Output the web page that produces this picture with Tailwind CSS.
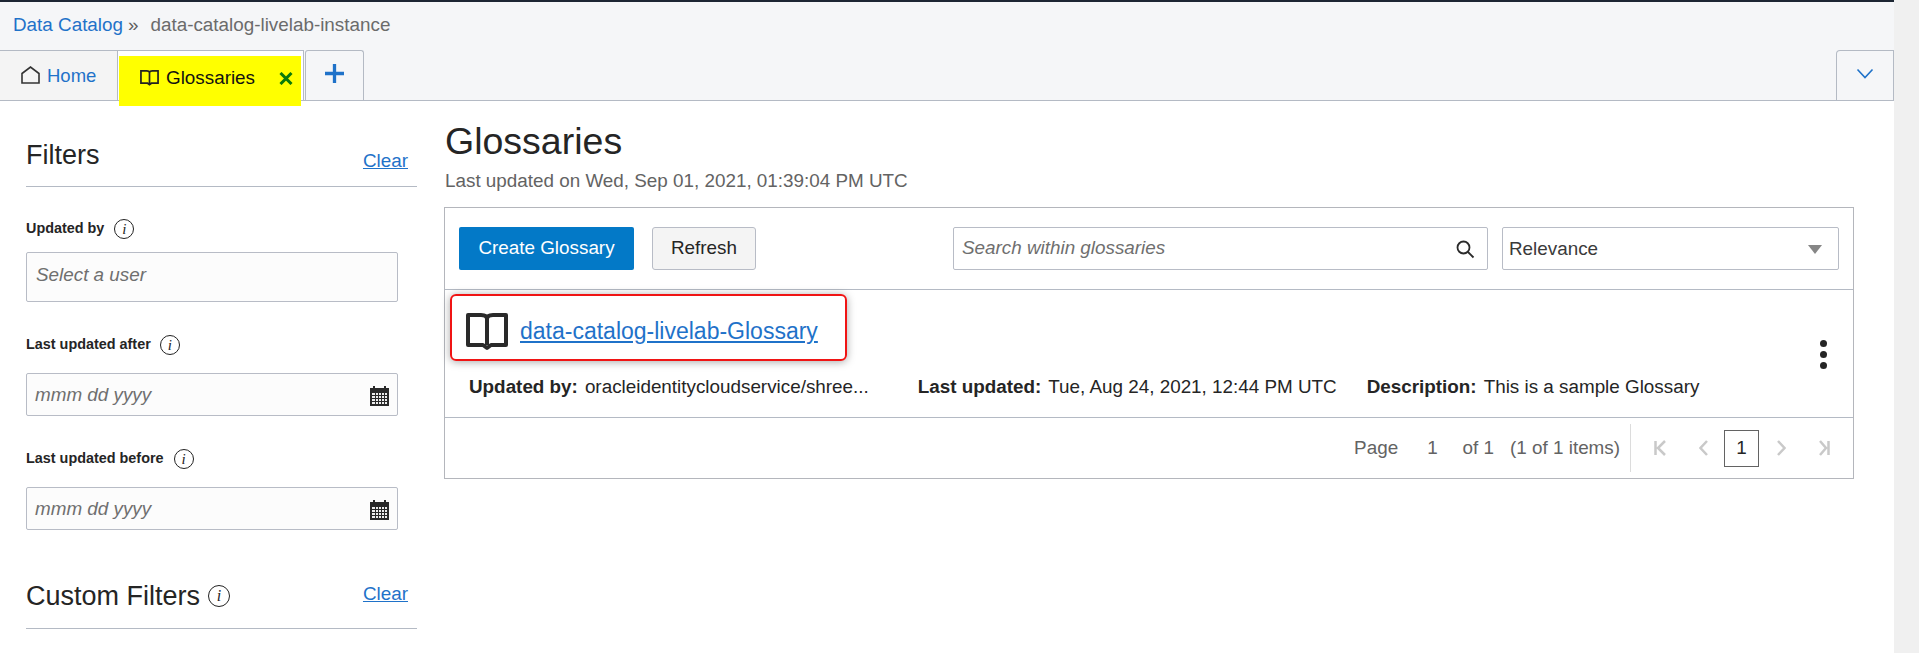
<!DOCTYPE html>
<html lang="en">

<head>
  <meta charset="UTF-8" />
  <title>Glossaries - Data Catalog</title>
  <script src="https://cdn.jsdelivr.net/npm/@tailwindcss/browser@4"></script>
</head>

<body class="h-[653px] overflow-hidden bg-[#f0f0f0] font-['Liberation_Sans',Arial,sans-serif] text-[#252525]">
  <div class="w-[1894px] h-[653px] bg-white overflow-hidden">

    <!-- Breadcrumb and tabs -->
    <header class="h-[101px] bg-[#f5f6f8] border-t-[2px] border-t-[#1d2633] border-b border-b-[#b4bac4]">
      <div class="h-[48px] pl-[13px] pb-[2px] flex items-center text-[18.85px] leading-none">
        <a class="text-[#1f72c9]">Data Catalog</a>
        <span class="ml-[5px] text-[#5f5f5f]">»</span>
        <span class="ml-[12px] text-[#6b6b6b]">data-catalog-livelab-instance</span>
      </div>
      <div class="h-[50px] flex">
        <div class="w-[118px] h-[50px] bg-[#f4f4f4] border-r border-t border-[#b4bac4] flex items-center pl-[21px] gap-[7px] text-[18.5px] text-[#1f72c9]">
          <svg class="w-[19px] h-[18px] mb-[1px]" viewBox="0 0 19 18" fill="none" stroke="#333" stroke-width="1.6"><path d="M1 17V7.500L9.500 1 18 7.500V17z" /></svg>
          <span>Home</span>
        </div>
        <div class="relative w-[186px] h-[50px] bg-white border-r border-t border-[#b4bac4]">
          <!-- yellow annotation over the active tab -->
          <div class="absolute left-[1px] top-[5px] w-[182px] h-[50px] bg-[#ffff00] flex items-center pl-[21px] text-[18.85px] text-[#111] pb-[6px]">
            <svg class="w-[19px] h-[18px] mr-[7px]" viewBox="0 0 20 18" fill="none" stroke="#222" stroke-width="1.8"><path d="M1 1.500h6c1.500 0 3 .5 3 2 0-1.500 1.500-2 3-2h6v13h-7l-2 1.500-2-1.500H1zM10 3.500v11" /></svg>
            <span>Glossaries</span>
            <svg class="w-[14px] h-[13px] ml-[24px]" viewBox="0 0 14 13" stroke="#0a7a0a" stroke-width="3"><path d="M1.500 1l11 11M12.500 1l-11 11" /></svg>
          </div>
        </div>
        <div class="ml-px w-[59px] h-[50px] bg-[#f5f6f8] border border-b-0 border-[#b4bac4] rounded-t-[3px] flex items-center justify-center">
          <svg class="w-[19px] h-[19px] mb-[4px]" viewBox="0 0 19 19" stroke="#1f72c9" stroke-width="3.300"><path d="M9.500 0v19M0 9.500h19" /></svg>
        </div>
        <div class="ml-auto w-[58px] h-[50px] border border-b-0 border-[#b4bac4] rounded-tl-[4px] flex items-center justify-center">
          <svg class="w-[18px] h-[12px] mb-[4px]" viewBox="0 0 18 12" fill="none" stroke="#1f72c9" stroke-width="1.600"><path d="M1.500 1.500L9 9.500l7.500-8" /></svg>
        </div>
      </div>
    </header>

    <div class="flex">
      <!-- Filters -->
      <aside class="w-[444px] shrink-0 pl-[26px] pr-[27px]">
        <div class="h-[86px] flex items-end justify-between border-b border-[#b4bac4] pb-[14px]">
          <h2 class="text-[27px] leading-[34px]">Filters</h2>
          <a class="mr-[9px] text-[18.85px] leading-[22px] text-[#1f72c9] underline">Clear</a>
        </div>

        <div class="mt-[32px] flex items-center gap-[10px] h-[20px] text-[14.4px] font-bold">
          Updated by
          <span class="w-[20px] h-[20px] rounded-full border border-[#222] flex items-center justify-center font-['Liberation_Serif',serif] italic font-normal text-[15px]">i</span>
        </div>
        <div class="mt-[13px] w-[372px] h-[50px] bg-[#fcfcfc] border border-[#b8bcc6] rounded-[2px] pl-[9px] pt-[11px] text-[18.85px] leading-[22px] italic text-[#6f6f6f]">Select a user</div>

        <div class="mt-[33px] flex items-center gap-[9px] h-[20px] text-[14.4px] font-bold">
          Last updated after
          <span class="w-[20px] h-[20px] rounded-full border border-[#222] flex items-center justify-center font-['Liberation_Serif',serif] italic font-normal text-[15px]">i</span>
        </div>
        <div class="mt-[18px] w-[372px] h-[43px] bg-[#fcfcfc] border border-[#b8bcc6] rounded-[2px] pl-[8px] pr-[8px] flex items-center justify-between text-[18.85px] italic text-[#6f6f6f]">
          <span class="pt-[2px]">mmm dd yyyy</span>
          <svg class="w-[19px] h-[20px] mt-[2px]" viewBox="0 0 19 20"><path fill="#2a2a2a" d="M0 2h3V0h2v2h9V0h2v2h3v18H0z" /><path fill="#eee" d="M2 7h15v11H2z" /><path stroke="#2a2a2a" stroke-width="1" d="M2 9.500h15M2 12.500h15M2 15.500h15M5.500 7v11M8.500 7v11M11.500 7v11M14.500 7v11" /></svg>
        </div>

        <div class="mt-[33px] flex items-center gap-[10px] h-[20px] text-[14.4px] font-bold">
          Last updated before
          <span class="w-[20px] h-[20px] rounded-full border border-[#222] flex items-center justify-center font-['Liberation_Serif',serif] italic font-normal text-[15px]">i</span>
        </div>
        <div class="mt-[18px] w-[372px] h-[43px] bg-[#fcfcfc] border border-[#b8bcc6] rounded-[2px] pl-[8px] pr-[8px] flex items-center justify-between text-[18.85px] italic text-[#6f6f6f]">
          <span class="pt-[2px]">mmm dd yyyy</span>
          <svg class="w-[19px] h-[20px] mt-[2px]" viewBox="0 0 19 20"><path fill="#2a2a2a" d="M0 2h3V0h2v2h9V0h2v2h3v18H0z" /><path fill="#eee" d="M2 7h15v11H2z" /><path stroke="#2a2a2a" stroke-width="1" d="M2 9.500h15M2 12.500h15M2 15.500h15M5.500 7v11M8.500 7v11M11.500 7v11M14.500 7v11" /></svg>
        </div>

        <div class="mt-[46px] h-[53px] flex justify-between border-b border-[#b4bac4]">
          <h2 class="mt-[3px] flex items-center h-[34px] text-[27px] leading-[34px]">
            Custom Filters
            <span class="ml-[8px] w-[22px] h-[22px] rounded-full border border-[#222] flex items-center justify-center font-['Liberation_Serif',serif] italic text-[16px]">i</span>
          </h2>
          <a class="mr-[9px] mt-[7px] text-[18.85px] leading-[22px] text-[#1f72c9] underline">Clear</a>
        </div>
      </aside>

      <!-- Main content -->
      <main class="w-[1410px] pt-[18px]">
        <h1 class="text-[37.500px] leading-[44px] ml-px">Glossaries</h1>
        <p class="ml-px mt-[7px] text-[18.85px] leading-[22px] text-[#636363]">Last updated on Wed, Sep 01, 2021, 01:39:04 PM UTC</p>

        <div class="mt-[15px] relative h-[272px] border border-[#b4b6bc]">
          <!-- Toolbar -->
          <div class="h-[82px] border-b border-[#b4bac4] pl-[14px] pr-[14px] flex items-center">
            <button class="w-[175px] h-[43px] bg-[#0379c7] rounded-[2px] text-white text-[18.85px]">Create Glossary</button>
            <button class="ml-[18px] w-[104px] h-[43px] bg-[#f4f4f4] border border-[#b8bcc6] rounded-[3px] text-[18.85px]">Refresh</button>
            <div class="ml-auto w-[535px] h-[43px] border border-[#b8bcc6] rounded-[2px] pl-[8px] pr-[12px] flex items-center justify-between text-[18.85px] italic text-[#6f6f6f]">
              <span>Search within glossaries</span>
              <svg class="w-[20px] h-[20px]" viewBox="0 0 20 20" fill="none" stroke="#2a2a2a" stroke-width="1.800"><circle cx="8.500" cy="8.500" r="6" /><path d="M13 13l5.500 5.500" /></svg>
            </div>
            <div class="ml-[14px] w-[337px] h-[43px] border border-[#b8bcc6] rounded-[2px] pl-[6px] pr-[16px] flex items-center justify-between text-[18.85px] text-[#3a3a3a]">
              <span class="pt-[2px]">Relevance</span>
              <span class="w-0 h-0 mt-[2px] border-x-[7px] border-x-transparent border-t-[9px] border-t-[#868686]"></span>
            </div>
          </div>

          <!-- Glossary row -->
          <div class="relative h-[128px] border-b border-[#b4bac4]">
            <div class="h-[68px] pl-[21px] pt-[22px] flex items-start">
              <svg class="w-[42px] h-[40px] shrink-0" viewBox="0 0 42 40" fill="none" stroke="#2a2a2a" stroke-width="4" stroke-linejoin="round"><path d="M2 3h13c3 0 6 1 6 4 0-3 3-4 6-4h13v30H25l-4 3-4-3H2zM21 7v26" /></svg>
              <a class="ml-[12px] mt-[6px] text-[23px] leading-[26px] text-[#1f72c9] underline">data-catalog-livelab-Glossary</a>
            </div>
            <div class="mt-[18px] ml-[24px] h-[22px] flex items-center text-[18.85px] leading-[22px] whitespace-nowrap">
              <b>Updated by:</b><span class="ml-[7px]">oracleidentitycloudservice/shree...</span>
              <b class="ml-[49px]">Last updated:</b><span class="ml-[7px]">Tue, Aug 24, 2021, 12:44 PM UTC</span>
              <b class="ml-[30px]">Description:</b><span class="ml-[7px]">This is a sample Glossary</span>
            </div>
            <div class="absolute right-[26px] top-[50px] flex flex-col gap-[4px]">
              <span class="w-[7px] h-[7px] rounded-full bg-[#252525]"></span>
              <span class="w-[7px] h-[7px] rounded-full bg-[#252525]"></span>
              <span class="w-[7px] h-[7px] rounded-full bg-[#252525]"></span>
            </div>
            <!-- red annotation box -->
            <div class="absolute left-[5px] top-[4px] w-[397px] h-[67px] border-[2px] border-[#f01414] rounded-[6px] shadow-[0_1px_8px_rgba(0,0,0,0.35)]"></div>
          </div>

          <!-- Pagination -->
          <div class="h-[60px] flex items-center justify-end pr-[23px] text-[18.85px] text-[#636363]">
            <span>Page</span>
            <span class="ml-[29px]">1</span>
            <span class="ml-[25px]">of 1</span>
            <span class="ml-[16px]">(1 of 1 items)</span>
            <span class="ml-[10px] h-[48px] border-l border-[#dcdcdc]"></span>
            <svg class="ml-[23px] w-[12px] h-[16px]" viewBox="0 0 12 16" fill="none" stroke="#c9c9c9" stroke-width="2.500"><path d="M1.500 1v14M11 1L4 8l7 7" /></svg>
            <svg class="ml-[33px] w-[9px] h-[16px]" viewBox="0 0 9 16" fill="none" stroke="#c9c9c9" stroke-width="2.500"><path d="M8 1L1.500 8 8 15" /></svg>
            <span class="ml-[16px] w-[35px] h-[37px] border border-[#636363] flex items-center justify-center text-[#252525]">1</span>
            <svg class="ml-[18px] w-[9px] h-[16px]" viewBox="0 0 9 16" fill="none" stroke="#c9c9c9" stroke-width="2.500"><path d="M1 1l6.500 7L1 15" /></svg>
            <svg class="ml-[33px] w-[11px] h-[16px]" viewBox="0 0 11 16" fill="none" stroke="#c9c9c9" stroke-width="2.500"><path d="M1 1l6 7-6 7M9.500 1v14" /></svg>
          </div>
        </div>
      </main>
    </div>
  </div>
</body>

</html>
